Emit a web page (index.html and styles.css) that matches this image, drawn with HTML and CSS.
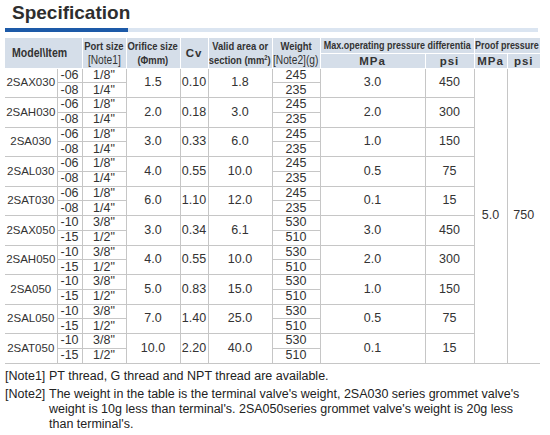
FILE: index.html
```html
<!DOCTYPE HTML>
<html lang="en">
  <head>
    <title>Specification</title>
    <meta charset="utf-8">
    <link rel="stylesheet" href="styles.css">
  </head>
  <body>

  <div id="page">

    <div id="title">Specification</div>
    <div class="title-bar"><span class="title-bar-accent"></span></div>

    <table class="spec">
      <colgroup>
        <col style="width:52px"><col style="width:25px"><col style="width:44px">
        <col style="width:54px"><col style="width:28px"><col style="width:64px">
        <col style="width:48px"><col style="width:105px"><col style="width:49px">
        <col style="width:33px"><col style="width:33px">
      </colgroup>
      <thead>
        <tr class="head-top">
          <th colspan="2" rowspan="2" class="first th-model"><span class="model-label">Model\Item</span></th>
          <th rowspan="2">
            <div class="th-lines"><span class="squeeze">Port size</span><span class="squeeze note-ref">[Note1]</span></div>
          </th>
          <th rowspan="2">
            <div class="th-lines"><span class="squeeze">Orifice size</span><span class="squeeze">(&Phi;mm)</span></div>
          </th>
          <th rowspan="2" class="th-cv">Cv</th>
          <th rowspan="2">
            <div class="th-lines"><span class="squeeze">Valid area or</span><span class="squeeze">section (mm<sup>2</sup>)</span></div>
          </th>
          <th rowspan="2">
            <div class="th-lines"><span class="squeeze">Weight</span><span class="squeeze note-ref">[Note2](g)</span></div>
          </th>
          <th colspan="2">
            <div class="th-lines"><span class="squeeze tight">Max.operating pressure differentia</span></div>
          </th>
          <th colspan="2" class="last">
            <div class="th-lines"><span class="squeeze tight">Proof pressure</span></div>
          </th>
        </tr>
        <tr class="head-bottom">
          <th class="unit">MPa</th>
          <th class="unit">psi</th>
          <th class="unit">MPa</th>
          <th class="unit last">psi</th>
        </tr>
      </thead>
      <tbody>
        <tr>
          <td rowspan="2" class="model">2SAX030</td><td>-06</td><td>1/8"</td>
          <td rowspan="2">1.5</td><td rowspan="2">0.10</td><td rowspan="2">1.8</td><td>245</td>
          <td rowspan="2">3.0</td><td rowspan="2">450</td>
          <td rowspan="20">5.0</td><td rowspan="20" class="last">750</td>
        </tr>
        <tr><td>-08</td><td>1/4"</td><td>235</td></tr>

        <tr>
          <td rowspan="2" class="model">2SAH030</td><td>-06</td><td>1/8"</td>
          <td rowspan="2">2.0</td><td rowspan="2">0.18</td><td rowspan="2">3.0</td><td>245</td>
          <td rowspan="2">2.0</td><td rowspan="2">300</td>
        </tr>
        <tr><td>-08</td><td>1/4"</td><td>235</td></tr>

        <tr>
          <td rowspan="2" class="model">2SA030</td><td>-06</td><td>1/8"</td>
          <td rowspan="2">3.0</td><td rowspan="2">0.33</td><td rowspan="2">6.0</td><td>245</td>
          <td rowspan="2">1.0</td><td rowspan="2">150</td>
        </tr>
        <tr><td>-08</td><td>1/4"</td><td>235</td></tr>

        <tr>
          <td rowspan="2" class="model">2SAL030</td><td>-06</td><td>1/8"</td>
          <td rowspan="2">4.0</td><td rowspan="2">0.55</td><td rowspan="2">10.0</td><td>245</td>
          <td rowspan="2">0.5</td><td rowspan="2">75</td>
        </tr>
        <tr><td>-08</td><td>1/4"</td><td>235</td></tr>

        <tr>
          <td rowspan="2" class="model">2SAT030</td><td>-06</td><td>1/8"</td>
          <td rowspan="2">6.0</td><td rowspan="2">1.10</td><td rowspan="2">12.0</td><td>245</td>
          <td rowspan="2">0.1</td><td rowspan="2">15</td>
        </tr>
        <tr><td>-08</td><td>1/4"</td><td>235</td></tr>

        <tr>
          <td rowspan="2" class="model">2SAX050</td><td>-10</td><td>3/8"</td>
          <td rowspan="2">3.0</td><td rowspan="2">0.34</td><td rowspan="2">6.1</td><td>530</td>
          <td rowspan="2">3.0</td><td rowspan="2">450</td>
        </tr>
        <tr><td>-15</td><td>1/2"</td><td>510</td></tr>

        <tr>
          <td rowspan="2" class="model">2SAH050</td><td>-10</td><td>3/8"</td>
          <td rowspan="2">4.0</td><td rowspan="2">0.55</td><td rowspan="2">10.0</td><td>530</td>
          <td rowspan="2">2.0</td><td rowspan="2">300</td>
        </tr>
        <tr><td>-15</td><td>1/2"</td><td>510</td></tr>

        <tr>
          <td rowspan="2" class="model">2SA050</td><td>-10</td><td>3/8"</td>
          <td rowspan="2">5.0</td><td rowspan="2">0.83</td><td rowspan="2">15.0</td><td>530</td>
          <td rowspan="2">1.0</td><td rowspan="2">150</td>
        </tr>
        <tr><td>-15</td><td>1/2"</td><td>510</td></tr>

        <tr>
          <td rowspan="2" class="model">2SAL050</td><td>-10</td><td>3/8"</td>
          <td rowspan="2">7.0</td><td rowspan="2">1.40</td><td rowspan="2">25.0</td><td>530</td>
          <td rowspan="2">0.5</td><td rowspan="2">75</td>
        </tr>
        <tr><td>-15</td><td>1/2"</td><td>510</td></tr>

        <tr>
          <td rowspan="2" class="model">2SAT050</td><td>-10</td><td>3/8"</td>
          <td rowspan="2">10.0</td><td rowspan="2">2.20</td><td rowspan="2">40.0</td><td>530</td>
          <td rowspan="2">0.1</td><td rowspan="2">15</td>
        </tr>
        <tr><td>-15</td><td>1/2"</td><td>510</td></tr>
      </tbody>
    </table>

    <div class="notes">
      <div class="note">
        <span class="note-label">[Note1]</span>
        <span class="note-text">PT thread, G thread and NPT thread are available.</span>
      </div>
      <div class="note">
        <span class="note-label">[Note2]</span>
        <span class="note-text">The weight in the table is the terminal valve's weight, 2SA030 series grommet valve's<br>weight is 10g less than terminal's. 2SA050series grommet valve's weight is 20g less<br>than terminal's.</span>
      </div>
    </div>

  </div>

  </body>
</html>
```

FILE: styles.css
```css
html {
  height: 100%;
}
body {
  margin: 0;
  padding: 0;
  background: #ffffff;
  color: #333333;
  font-family: "Liberation Sans", Arial, sans-serif;
  font-size: 12px;
}

#page {
  padding: 2px 10px 0 5px;
}

#title {
  margin-left: 7px;
  font-size: 19px;
  font-weight: bold;
  line-height: 22px;
  color: #2e2e2e;
}

.title-bar {
  display: flex;
  width: 533px;
  height: 4px;
  margin-top: 4px;
  background-color: #dbe5f1;
}
.title-bar-accent {
  width: 123px;
  background-color: #1d5aa8;
}

.spec {
  margin-top: 6px;
  width: 535px;
  table-layout: fixed;
  border-collapse: collapse;
  border: none;
}

.spec th {
  background-color: #d5dee9;
  border: 1px solid #ffffff;
  border-top: none;
  padding: 0;
  font-size: 11.5px;
  line-height: 14px;
  font-weight: bold;
  color: #333333;
  text-align: center;
  white-space: nowrap;
  overflow: hidden;
}
.spec .first {
  border-left: none;
}
.spec .last {
  border-right: none;
}

.head-top {
  height: 15px;
}
.head-bottom {
  height: 14px;
}

.th-model {
  text-align: left;
  padding-left: 4px;
}
.model-label {
  display: inline-block;
  font-size: 12px;
  transform: scaleX(0.88);
  transform-origin: left center;
}
.th-cv {
  font-size: 12px;
  letter-spacing: 1px;
}

/* condensed header labels */
.th-lines {
  display: flex;
  flex-direction: column;
  align-items: center;
}
.squeeze {
  display: inline-block;
  flex: none;
  transform: scaleX(0.82);
}
.squeeze.tight {
  transform: scaleX(0.78);
}
.note-ref {
  font-weight: normal;
  font-size: 12px;
  transform: scaleX(0.85);
}
.spec sup {
  font-size: 7px;
  line-height: 0;
  vertical-align: 4px;
}

.unit {
  font-size: 12px;
  letter-spacing: 1px;
}

.spec tbody tr {
  height: 14.75px;
}
.spec td {
  border: 1px solid #c6c6c6;
  padding: 0;
  font-size: 12.5px;
  line-height: 13px;
  text-align: center;
  color: #333333;
  white-space: nowrap;
}
.spec tbody tr:first-child td {
  border-top: none;
}
.spec td.model {
  border-left: none;
  font-size: 11.5px;
}
.spec td.last {
  border-right: none;
}

.notes {
  margin-top: 5px;
  font-size: 12.5px;
  line-height: 15px;
  color: #222222;
}
.note {
  display: flex;
}
.note + .note {
  margin-top: 3px;
}
.note-label {
  flex: 0 0 44px;
}
```
